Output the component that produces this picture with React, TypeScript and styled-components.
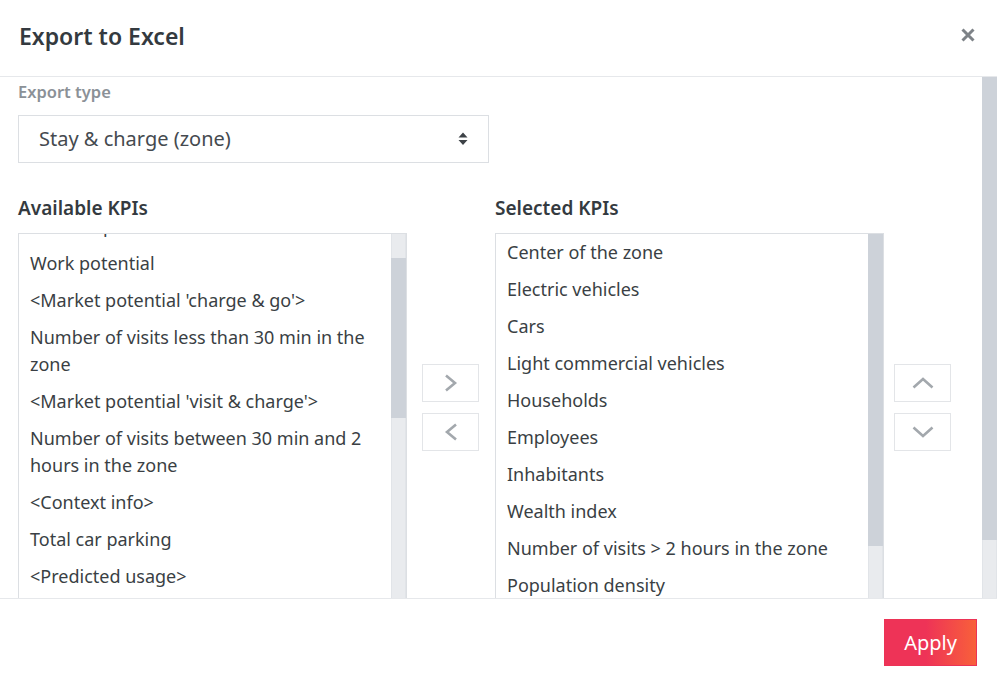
import React, { useLayoutEffect, useRef } from 'react';
import styled, { createGlobalStyle } from 'styled-components';

const GlobalStyle = createGlobalStyle`
  html, body {
    margin: 0;
    padding: 0;
    height: 100%;
    overflow: hidden;
    background: #ffffff;
  }
  body {
    font-family: "Noto Sans", "Open Sans", sans-serif;
    color: #343a40;
  }
  #root {
    height: 100%;
  }
  * {
    box-sizing: border-box;
  }
`;

const Modal = styled.div`
  display: flex;
  flex-direction: column;
  height: 100%;
  background: #ffffff;
`;

const Header = styled.div`
  height: 77px;
  flex-shrink: 0;
  display: flex;
  justify-content: space-between;
  align-items: flex-start;
  padding: 20px 22px 0 19px;
  border-bottom: 1px solid #e6e8eb;
`;

const Title = styled.h1`
  margin: 0;
  font-size: 23px;
  line-height: 32px;
  font-weight: 600;
  color: #343a40;
`;

const CloseButton = styled.button`
  border: none;
  background: none;
  padding: 0;
  margin-top: 8px;
  width: 14px;
  height: 14px;
  display: flex;
  cursor: pointer;
`;

const Body = styled.div`
  flex: 1;
  min-height: 0;
  display: flex;
  overflow: hidden;
`;

const BodyContent = styled.div`
  flex: 1;
  padding: 4px 0 0 18px;
`;

const ScrollTrack = styled.div`
  width: 15px;
  flex-shrink: 0;
  position: relative;
  background: #e9ebee;
  box-shadow: inset 1px 0 0 #e1e4e8, inset -1px 0 0 #e1e4e8;
`;

const ScrollThumb = styled.div<{ $top: number; $size: number }>`
  position: absolute;
  left: 0;
  right: 0;
  top: ${(p) => p.$top}px;
  height: ${(p) => p.$size}px;
  background: #cdd2d9;
`;

const Label = styled.div`
  font-size: 16.5px;
  line-height: 22px;
  font-weight: 600;
  color: #8b9197;
`;

const Select = styled.div`
  margin-top: 12px;
  width: 471px;
  height: 48px;
  border: 1px solid #dcdfe3;
  display: flex;
  align-items: center;
  justify-content: space-between;
  padding: 0 20px 0 20px;
  font-size: 20px;
  line-height: 24px;
  color: #454a4f;
`;

const Columns = styled.div`
  margin-top: 33px;
  display: flex;
  gap: 16px;
`;

const Column = styled.div`
  display: flex;
  flex-direction: column;
`;

const ColumnTitle = styled.h2`
  margin: 0 0 13px;
  font-size: 19px;
  line-height: 24px;
  font-weight: 600;
  color: #343a40;
`;

const ColumnRow = styled.div<{ $gap: number }>`
  display: flex;
  align-items: flex-start;
  gap: ${(p) => p.$gap}px;
`;

const ListBox = styled.div`
  width: 389px;
  height: 400px;
  border: 1px solid #dcdfe3;
  display: flex;
`;

const ListViewport = styled.div`
  flex: 1;
  overflow: hidden;
`;

const ListItem = styled.div`
  padding: 5px 11px;
  font-size: 18px;
  line-height: 27px;
  color: #3a3f44;
`;

const ButtonStack = styled.div`
  margin-top: 131px;
  display: flex;
  flex-direction: column;
  gap: 11px;
`;

const MoveButton = styled.button`
  width: 57px;
  height: 38px;
  border: 1px solid #e3e5e8;
  background: #ffffff;
  display: flex;
  align-items: center;
  justify-content: center;
  padding: 0;
  cursor: pointer;
`;

const Footer = styled.div`
  flex-shrink: 0;
  border-top: 1px solid #e6e8eb;
  padding: 20px 20px 16px;
  display: flex;
  justify-content: flex-end;
`;

const ApplyButton = styled.button`
  height: 47px;
  width: 93px;
  padding: 0;
  border: 1px solid #ec3356;
  background: linear-gradient(90deg, #ee3357 0%, #ee3357 45%, #f8603a 100%);
  color: #ffffff;
  font-family: "Noto Sans", "Open Sans", sans-serif;
  font-size: 20px;
  cursor: pointer;
`;

const available = [
  "<Market potential 'stay & charge'>",
  'Tourism potential',
  'Work potential',
  "<Market potential 'charge & go'>",
  'Number of visits less than 30 min in the zone',
  "<Market potential 'visit & charge'>",
  'Number of visits between 30 min and 2 hours in the zone',
  '<Context info>',
  'Total car parking',
  '<Predicted usage>',
  'Predicted number of sessions',
  'Predicted energy consumed',
  'Average session duration',
  '<Points of interest>',
  'Restaurants',
  'Supermarkets',
  'Shops',
  'Hotels',
  'Schools',
  'Offices',
  'Parks',
  'Hospitals',
  'Cinemas',
  'Gyms',
];

const selected = [
  'Center of the zone',
  'Electric vehicles',
  'Cars',
  'Light commercial vehicles',
  'Households',
  'Employees',
  'Inhabitants',
  'Wealth index',
  'Number of visits > 2 hours in the zone',
  'Population density',
  'Average income',
  'Area',
  'Number of chargers',
];

const Chevron = ({ dir }: { dir: 'left' | 'right' | 'up' | 'down' }) => {
  const paths = {
    right: { w: 14, h: 18, d: 'M2 1.5 L11 9 L2 16.5' },
    left: { w: 14, h: 18, d: 'M12 1.5 L3 9 L12 16.5' },
    up: { w: 22, h: 12, d: 'M1.5 10.5 L11 2 L20.5 10.5' },
    down: { w: 22, h: 12, d: 'M1.5 1.5 L11 10 L20.5 1.5' },
  }[dir];
  return (
    <svg width={paths.w} height={paths.h} viewBox={`0 0 ${paths.w} ${paths.h}`}>
      <path d={paths.d} fill="none" stroke="#a3a8ad" strokeWidth={2.6} />
    </svg>
  );
};

export default function App() {
  const availableRef = useRef<HTMLDivElement>(null);

  useLayoutEffect(() => {
    if (availableRef.current) availableRef.current.scrollTop = 63;
  }, []);

  return (
    <>
      <GlobalStyle />
      <Modal>
        <Header>
          <Title>Export to Excel</Title>
          <CloseButton aria-label="Close">
            <svg width="14" height="14" viewBox="0 0 14 14">
              <path d="M1.5 1.5 L12.5 12.5 M12.5 1.5 L1.5 12.5" stroke="#7d8287" strokeWidth={3} />
            </svg>
          </CloseButton>
        </Header>

        <Body>
          <BodyContent>
            <Label>Export type</Label>
            <Select>
              <span>Stay &amp; charge (zone)</span>
              <svg width="10" height="14" viewBox="0 0 10 14">
                <path d="M5 0.5 L9.5 5.5 L0.5 5.5 Z M0.5 8 L9.5 8 L5 13 Z" fill="#3d4247" />
              </svg>
            </Select>

            <Columns>
              <Column>
                <ColumnTitle>Available KPIs</ColumnTitle>
                <ColumnRow $gap={15}>
                  <ListBox>
                    <ListViewport ref={availableRef}>
                      {available.map((kpi) => (
                        <ListItem key={kpi}>{kpi}</ListItem>
                      ))}
                    </ListViewport>
                    <ScrollTrack>
                      <ScrollThumb $top={24} $size={160} />
                    </ScrollTrack>
                  </ListBox>
                  <ButtonStack>
                    <MoveButton aria-label="Add">
                      <Chevron dir="right" />
                    </MoveButton>
                    <MoveButton aria-label="Remove">
                      <Chevron dir="left" />
                    </MoveButton>
                  </ButtonStack>
                </ColumnRow>
              </Column>

              <Column>
                <ColumnTitle>Selected KPIs</ColumnTitle>
                <ColumnRow $gap={10}>
                  <ListBox>
                    <ListViewport>
                      {selected.map((kpi) => (
                        <ListItem key={kpi}>{kpi}</ListItem>
                      ))}
                    </ListViewport>
                    <ScrollTrack>
                      <ScrollThumb $top={0} $size={312} />
                    </ScrollTrack>
                  </ListBox>
                  <ButtonStack>
                    <MoveButton aria-label="Move up">
                      <Chevron dir="up" />
                    </MoveButton>
                    <MoveButton aria-label="Move down">
                      <Chevron dir="down" />
                    </MoveButton>
                  </ButtonStack>
                </ColumnRow>
              </Column>
            </Columns>
          </BodyContent>
          <ScrollTrack>
            <ScrollThumb $top={0} $size={463} />
          </ScrollTrack>
        </Body>

        <Footer>
          <ApplyButton>Apply</ApplyButton>
        </Footer>
      </Modal>
    </>
  );
}
